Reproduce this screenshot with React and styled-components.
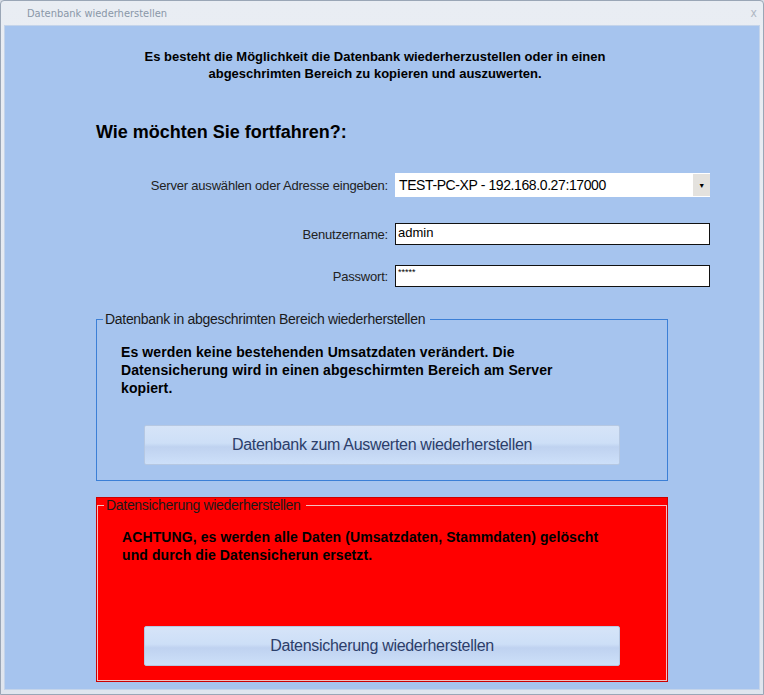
import React from "react";
import styled, { createGlobalStyle } from "styled-components";

const G = createGlobalStyle`
  html,body{margin:0;padding:0;background:#d9dee6;}
  body{font-family:"Liberation Sans",Arial,sans-serif;}
`;
const Win = styled.div`width:764px;height:695px;box-sizing:border-box;display:flex;flex-direction:column;
  background:linear-gradient(#e9edf3,#dfe5ee);border:1px solid #9aa6b6;border-radius:4px 4px 0 0;`;
const TitleBar = styled.div`height:24px;display:flex;align-items:center;justify-content:space-between;
  padding:0 6px 0 26px;font-size:11px;color:#8a97a8;font-family:"DejaVu Sans Condensed","DejaVu Sans",sans-serif;`;
const Close = styled.span`color:#b0b8c4;font-size:12px;`;
const Body = styled.div`flex:1;margin:0 3px 4px 3px;background:#a6c4ee;border:1px solid #c4d4ea;
  display:flex;flex-direction:column;padding-left:91px;`;
const Intro = styled.p`margin:22px 0 0 -91px;width:740px;text-align:center;font-weight:bold;font-size:13px;line-height:17px;color:#000;`;
const Heading = styled.h2`margin:40px 0 0 0;font-size:18px;font-weight:bold;color:#000;`;
const Row = styled.div`display:flex;align-items:center;margin-top:${p=>p.mt}px;`;
const Label = styled.label`width:299px;box-sizing:border-box;text-align:right;padding-right:7px;font-size:13px;color:#222;letter-spacing:-0.2px;`;
const Input = styled.div`width:315px;height:22px;box-sizing:border-box;background:#fff;border:1px solid #111;
  font-size:13px;padding:1px 2px;color:#000;`;
const Combo = styled.div`width:315px;height:24px;box-sizing:border-box;background:#fff;display:flex;align-items:center;
  font-size:14px;padding-left:4px;letter-spacing:-0.4px;`;
const Arrow = styled.span`margin-left:auto;width:17px;height:22px;background:#e4e2de;display:flex;align-items:center;justify-content:center;font-size:7px;`;
const Box = styled.div`margin-top:${p=>p.mt}px;width:572px;height:${p=>p.h}px;display:flex;
  background:${p=>p.red?"#ff0000":"transparent"};${p=>p.red?"box-shadow:inset 0 0 0 1px #cc0000;":""}`;
const Frame = styled.fieldset`flex:1;margin:0;padding:0;min-width:0;
  border:1px solid ${p=>p.red?"#f2c0c0":"#3b7fd6"};${p=>p.red?"margin:0 1px 1px 1px;":""}`;
const Legend = styled.legend`margin-left:6px;padding:0 5px 0 2px;font-size:14px;color:#1a1a1a;letter-spacing:-0.3px;`;
const Content = styled.div`height:100%;display:flex;flex-direction:column;align-items:center;`;
const Text = styled.p`align-self:flex-start;margin:${p=>p.mt}px 0 0 24px;font-weight:bold;font-size:14px;line-height:18px;color:#000;width:480px;letter-spacing:0.1px;`;
const Btn = styled.button`margin-top:auto;margin-bottom:${p=>p.mb}px;width:476px;height:40px;border:1px solid #b6c8e2;border-radius:2px;
  background:linear-gradient(#d6e4f8 0%,#cddff7 45%,#bfd2f0 55%,#cde0f9 100%);color:#2c3e6a;font-size:16px;
  font-family:"Liberation Sans",Arial,sans-serif;letter-spacing:-0.3px;`;

export default function App(){
  return <><G/><Win>
    <TitleBar><span>Datenbank wiederherstellen</span><Close>x</Close></TitleBar>
    <Body>
      <Intro>Es besteht die Möglichkeit die Datenbank wiederherzustellen oder in einen<br/>abgeschrimten Bereich zu kopieren und auszuwerten.</Intro>
      <Heading>Wie möchten Sie fortfahren?:</Heading>
      <Row mt={30}><Label>Server auswählen oder Adresse eingeben:</Label><Combo>TEST-PC-XP - 192.168.0.27:17000<Arrow>▼</Arrow></Combo></Row>
      <Row mt={26}><Label>Benutzername:</Label><Input>admin</Input></Row>
      <Row mt={20}><Label>Passwort:</Label><Input style={{fontSize:9,lineHeight:"10px"}}>*****</Input></Row>
      <Box mt={24} h={170}><Frame><Legend>Datenbank in abgeschrimten Bereich wiederherstellen</Legend><Content>
        <Text mt={16}>Es werden keine bestehenden Umsatzdaten verändert. Die Datensicherung wird in einen abgeschirmten Bereich am Server kopiert.</Text>
        <Btn mb={15}>Datenbank zum Auswerten wiederherstellen</Btn></Content></Frame></Box>
      <Box red mt={16} h={185}><Frame red><Legend>Datensicherung wiederherstellen</Legend><Content>
        <Text mt={15}>ACHTUNG, es werden alle Daten (Umsatzdaten, Stammdaten) gelöscht und durch die Datensicherun ersetzt.</Text>
        <Btn mb={14}>Datensicherung wiederherstellen</Btn></Content></Frame></Box>
    </Body>
  </Win></>;
}
